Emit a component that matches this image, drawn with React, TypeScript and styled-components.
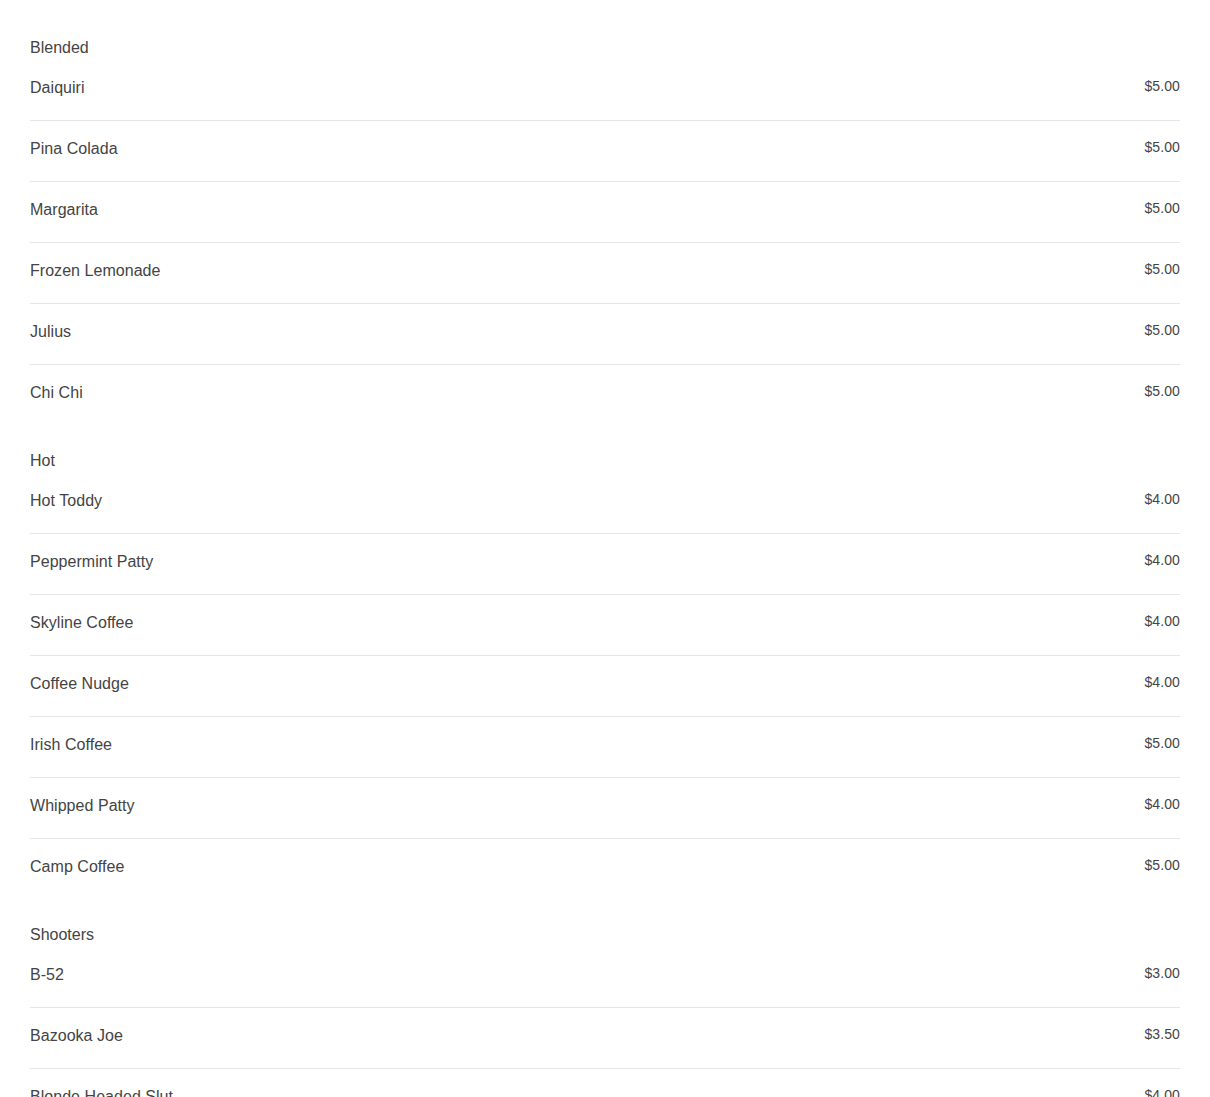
import React from "react";
import styled, { createGlobalStyle } from "styled-components";

const Global = createGlobalStyle`
  html, body { margin: 0; padding: 0; background: #fff; }
  body { font-family: "Liberation Sans", Arial, sans-serif; color: #444; }
`;

const Page = styled.main`
  padding: 12px 30px;
`;

const Section = styled.section`
  padding-top: 23px;
`;

const Heading = styled.h2`
  margin: 0;
  padding-top: 1px;
  font-size: 16px;
  line-height: 24px;
  font-weight: 400;
  color: #444;
`;

const List = styled.ul`
  list-style: none;
  margin: 0;
  padding: 0;
`;

const Row = styled.li<{ $last?: boolean }>`
  display: flex;
  justify-content: space-between;
  align-items: flex-start;
  padding: 16px 0 20px;
  border-bottom: ${(p) => (p.$last ? "none" : "1px solid #e6e6e6")};
`;

const Name = styled.span`
  font-size: 16px;
  line-height: 24px;
  letter-spacing: 0.04px;
  color: #444;
`;

const Price = styled.span`
  font-size: 14px;
  line-height: 20px;
  letter-spacing: 0.1px;
  color: #444;
`;

const menu: { title: string; items: [string, string][] }[] = [
  {
    title: "Blended",
    items: [
      ["Daiquiri", "$5.00"],
      ["Pina Colada", "$5.00"],
      ["Margarita", "$5.00"],
      ["Frozen Lemonade", "$5.00"],
      ["Julius", "$5.00"],
      ["Chi Chi", "$5.00"],
    ],
  },
  {
    title: "Hot",
    items: [
      ["Hot Toddy", "$4.00"],
      ["Peppermint Patty", "$4.00"],
      ["Skyline Coffee", "$4.00"],
      ["Coffee Nudge", "$4.00"],
      ["Irish Coffee", "$5.00"],
      ["Whipped Patty", "$4.00"],
      ["Camp Coffee", "$5.00"],
    ],
  },
  {
    title: "Shooters",
    items: [
      ["B-52", "$3.00"],
      ["Bazooka Joe", "$3.50"],
      ["Blonde Headed Slut", "$4.00"],
    ],
  },
];

export default function App() {
  return (
    <>
      <Global />
      <Page>
        {menu.map((sec) => (
          <Section key={sec.title}>
            <Heading>{sec.title}</Heading>
            <List>
              {sec.items.map(([n, p], i) => (
                <Row key={n} $last={i === sec.items.length - 1}>
                  <Name>{n}</Name>
                  <Price>{p}</Price>
                </Row>
              ))}
            </List>
          </Section>
        ))}
      </Page>
    </>
  );
}
